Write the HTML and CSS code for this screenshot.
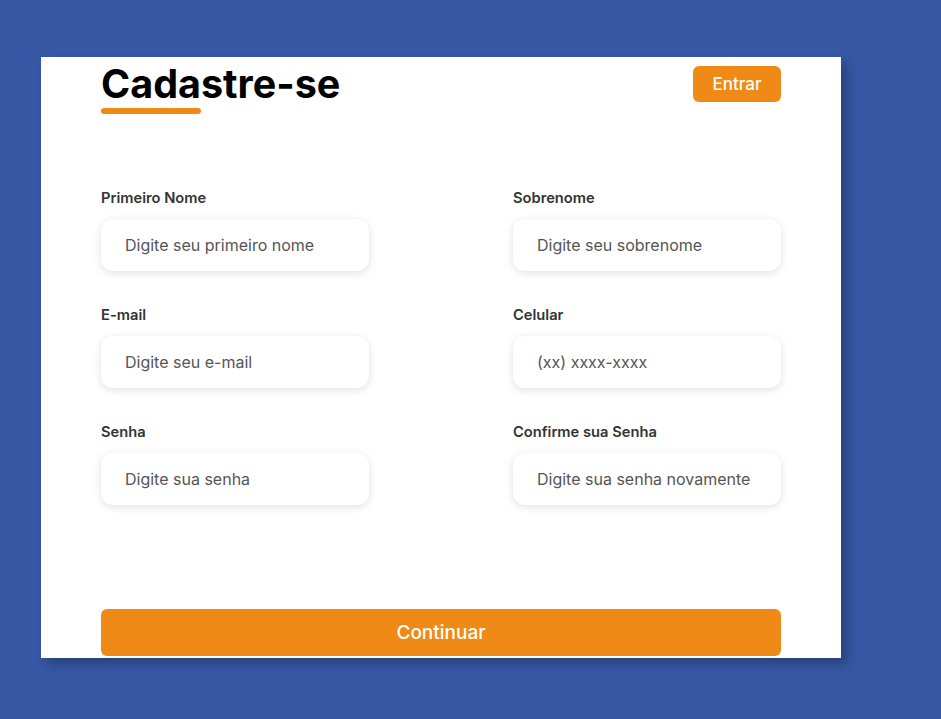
FILE: index.html
```html
<!DOCTYPE html>
<html lang="pt-BR">
<head>
<meta charset="utf-8">
<title>Cadastre-se</title>
<link rel="stylesheet" href="styles.css">
</head>
<body>
<div class="card">
  <div class="header">
    <div class="title-wrap">
      <h1 class="title">Cadastre-se</h1>
      <div class="underline"></div>
    </div>
    <button class="btn-entrar">Entrar</button>
  </div>
  <form class="form">
    <div class="field">
      <label class="label">Primeiro Nome</label>
      <input class="input" type="text" placeholder="Digite seu primeiro nome">
    </div>
    <div class="field">
      <label class="label">Sobrenome</label>
      <input class="input" type="text" placeholder="Digite seu sobrenome">
    </div>
    <div class="field">
      <label class="label">E-mail</label>
      <input class="input" type="text" placeholder="Digite seu e-mail">
    </div>
    <div class="field">
      <label class="label">Celular</label>
      <input class="input" type="text" placeholder="(xx) xxxx-xxxx">
    </div>
    <div class="field">
      <label class="label">Senha</label>
      <input class="input" type="password" placeholder="Digite sua senha">
    </div>
    <div class="field">
      <label class="label">Confirme sua Senha</label>
      <input class="input" type="password" placeholder="Digite sua senha novamente">
    </div>
  </form>
  <button class="btn-continuar">Continuar</button>
</div>
</body>
</html>
```
FILE: styles.css
```css
* { box-sizing: border-box; }
html, body { margin: 0; padding: 0; }
body {
  background: #3657a4;
  font-family: Inter, "Noto Sans", sans-serif;
  min-height: 719px;
  padding: 57px 0 0 41px;
}
.card {
  width: 800px;
  height: 601px;
  background: #fff;
  padding: 0 60px;
  overflow: hidden;
  box-shadow: 6px 6px 10px rgba(0, 0, 0, 0.25);
}
.header {
  display: flex;
  justify-content: space-between;
  align-items: flex-start;
  height: 122px;
}
.title {
  margin: 0;
  font-size: 39.5px;
  font-weight: 700;
  line-height: 54px;
  color: #000;
}
.underline {
  width: 100px;
  height: 6px;
  border-radius: 3px;
  background: #f08a17;
  margin-top: -3px;
}
.btn-entrar {
  margin-top: 9px;
  width: 88px;
  height: 36px;
  border: none;
  border-radius: 6px;
  background: #f08a17;
  color: #fff;
  font-family: Inter, "Noto Sans", sans-serif;
  font-size: 17px;
  font-weight: 500;
  padding: 0;
}
.form {
  display: grid;
  grid-template-columns: 268px 268px;
  justify-content: space-between;
  row-gap: 36px;
  margin-top: 11px;
}
.field {
  display: flex;
  flex-direction: column;
}
.label {
  font-size: 14.7px;
  font-weight: 600;
  color: #333;
  line-height: 16px;
  margin-bottom: 13px;
}
.input {
  width: 268px;
  height: 52px;
  border: none;
  border-radius: 12px;
  background: #fff;
  box-shadow: 0 2px 8px rgba(0, 0, 0, 0.12);
  padding: 0 24px;
  font-family: Inter, "Noto Sans", sans-serif;
  font-size: 16px;
  color: #333;
  outline: none;
}
.input::placeholder {
  color: #555;
}
.btn-continuar {
  display: block;
  margin-top: 104px;
  width: 680px;
  height: 47px;
  border: none;
  border-radius: 6px;
  background: #f08a17;
  color: #fff;
  font-family: Inter, "Noto Sans", sans-serif;
  font-size: 19px;
  font-weight: 500;
  padding: 0;
}
```
